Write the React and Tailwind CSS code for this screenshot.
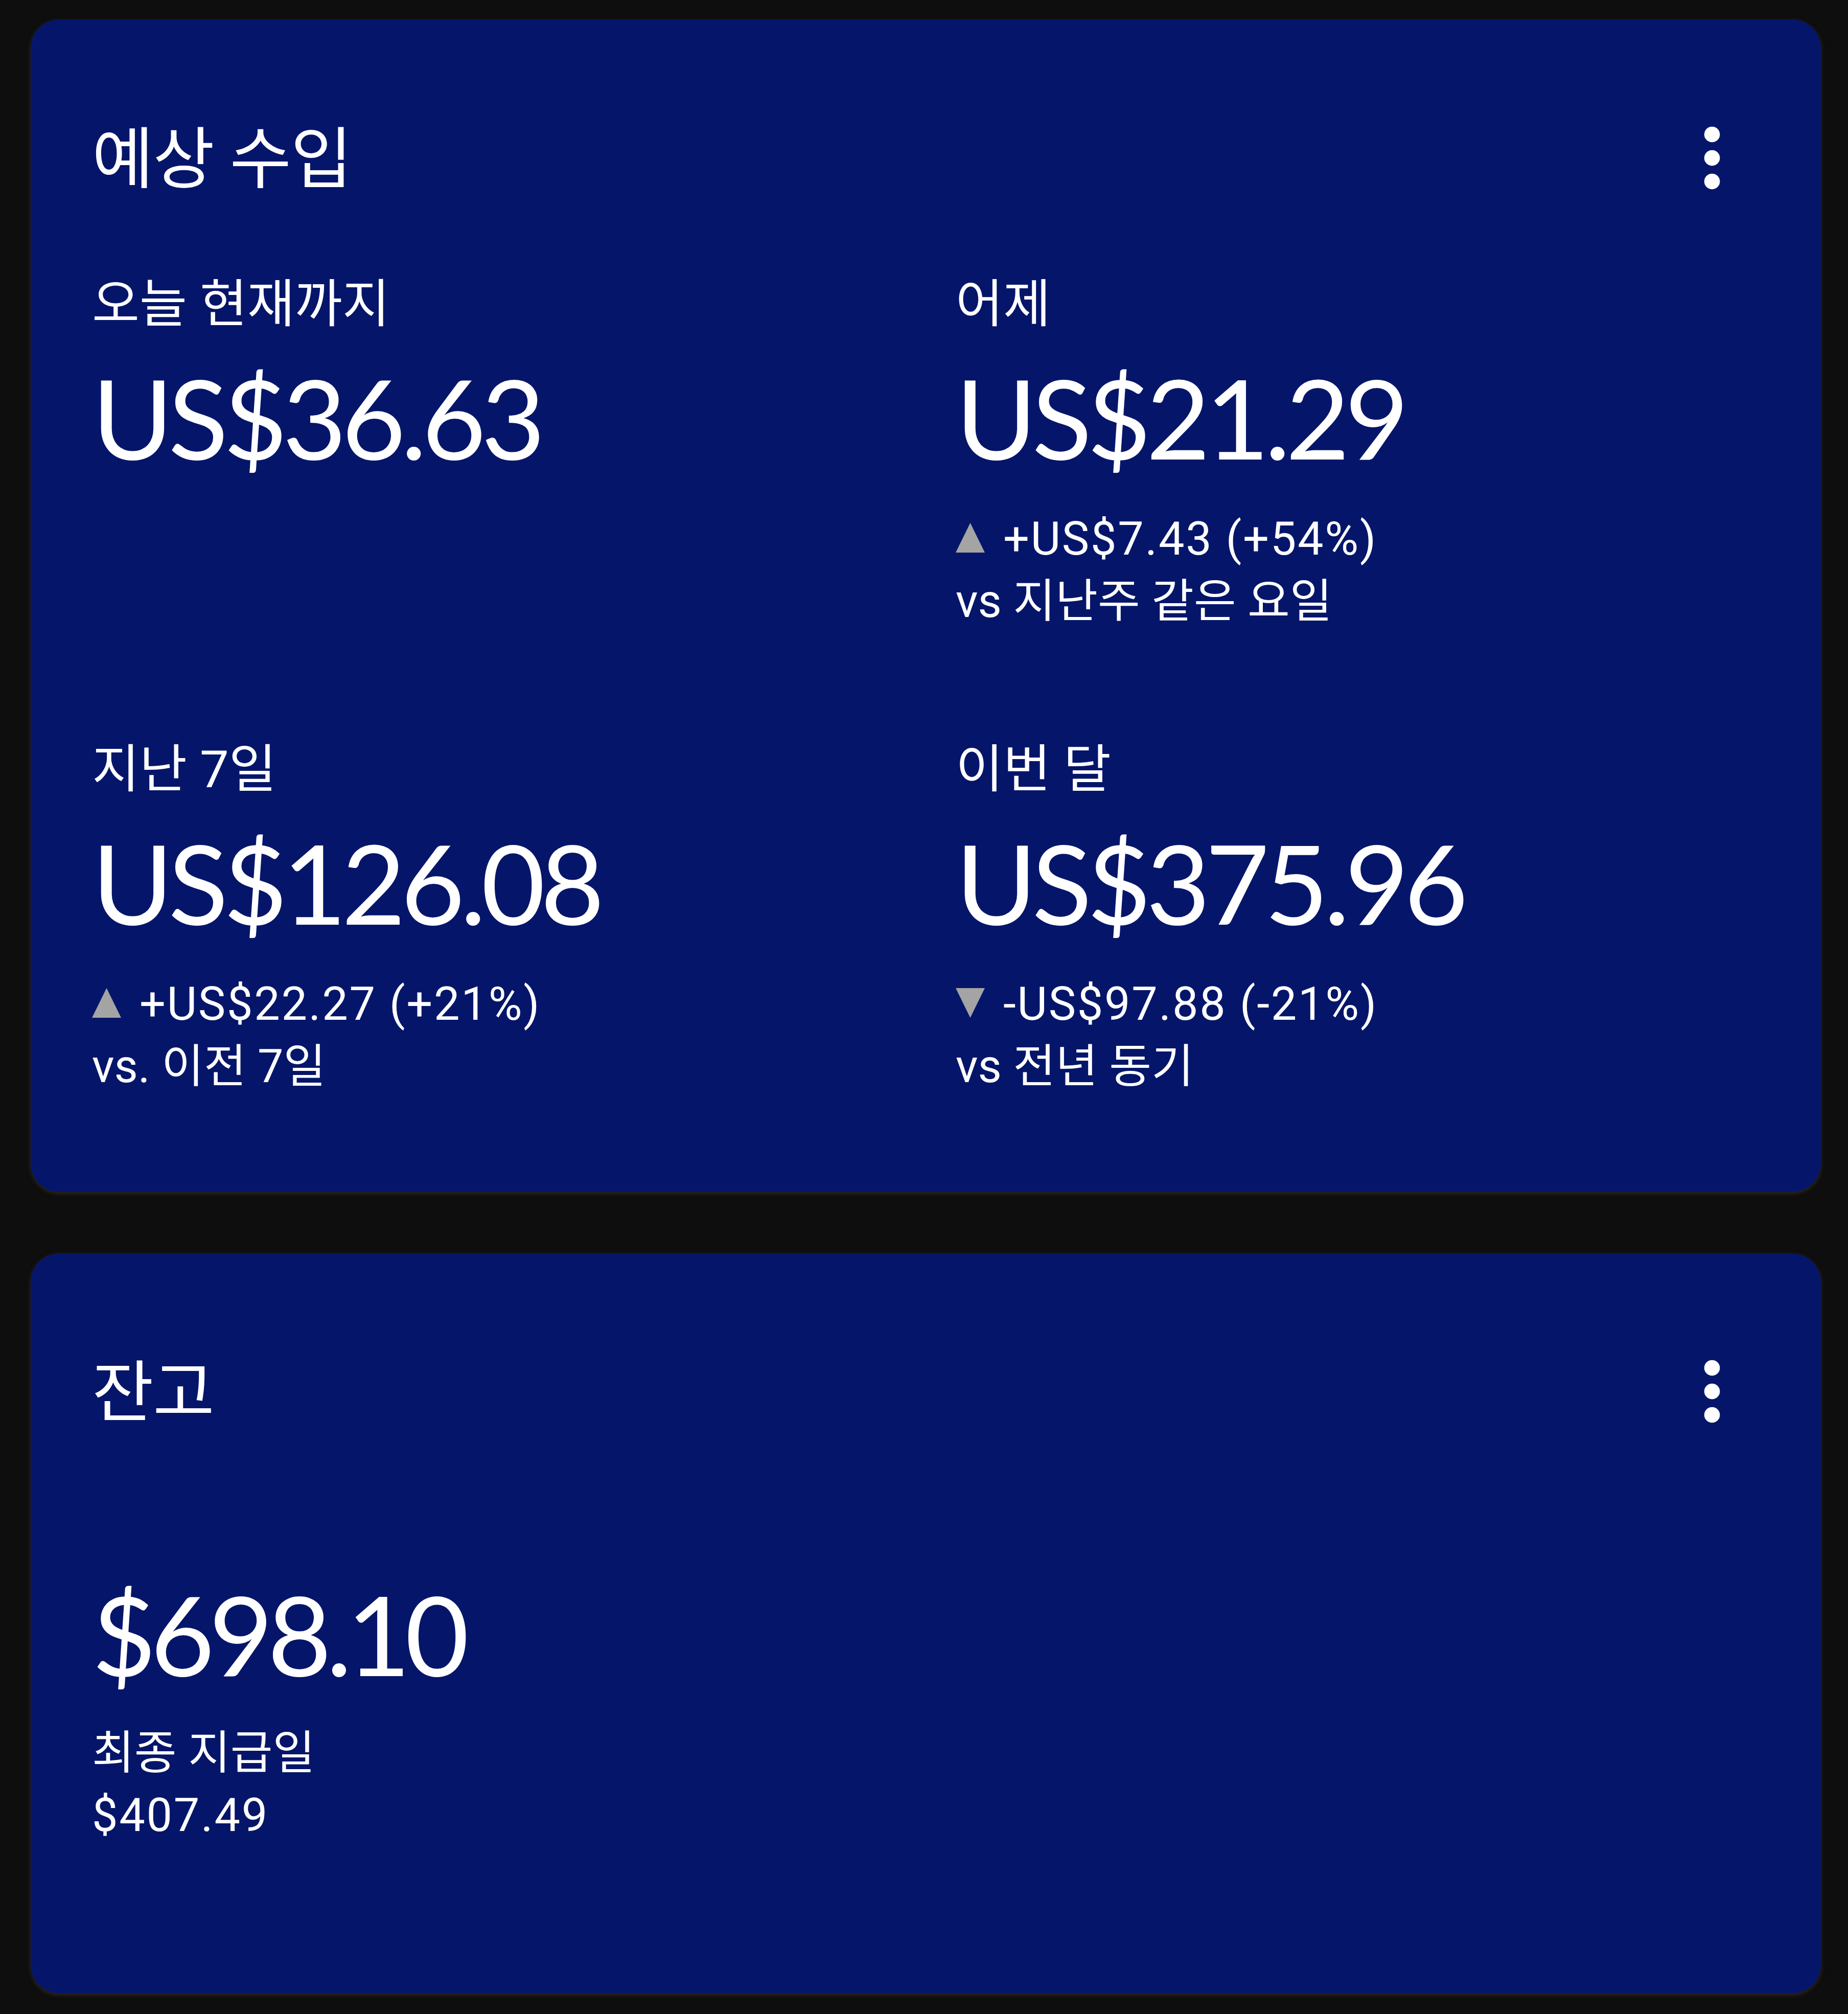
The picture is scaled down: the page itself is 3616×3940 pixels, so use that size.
const KO = "font-['Roboto','Noto_Sans_CJK_KR',sans-serif]"
const NUM = "font-['Lato','Roboto',sans-serif]"

const stats = [
  { label: '오늘 현재까지', value: 'US$36.63' },
  {
    label: '어제',
    value: 'US$21.29',
    up: true,
    delta: '+US$7.43 (+54%)',
    compare: 'vs 지난주 같은 요일',
  },
  {
    label: '지난 7일',
    value: 'US$126.08',
    up: true,
    delta: '+US$22.27 (+21%)',
    compare: 'vs. 이전 7일',
  },
  {
    label: '이번 달',
    value: 'US$375.96',
    up: false,
    delta: '-US$97.88 (-21%)',
    compare: 'vs 전년 동기',
  },
]

function MoreIcon() {
  return (
    <svg viewBox="0 0 24 24" className="h-[184px] w-[184px] shrink-0" fill="white">
      <circle cx="12" cy="6" r="2" />
      <circle cx="12" cy="12" r="2" />
      <circle cx="12" cy="18" r="2" />
    </svg>
  )
}

function Trend({ up }) {
  return (
    <svg
      viewBox="0 0 57 58"
      className="mr-[36px] inline-block h-[58px] w-[57px] align-[4px]"
      fill="#a4a4a4"
    >
      {up ? <polygon points="28.5,0 57,58 0,58" /> : <polygon points="0,0 57,0 28.5,58" />}
    </svg>
  )
}

function CardHeader({ title }) {
  return (
    <div className="flex items-start justify-between">
      <h2 className={`mt-[30px] text-[131px] leading-[131px] tracking-[-0.01em] ${KO}`}>{title}</h2>
      <MoreIcon />
    </div>
  )
}

function Stat({ label, value, delta, compare, up }) {
  return (
    <div>
      <p className={`text-[101px] leading-[101px] ${KO}`}>{label}</p>
      <p className={`mt-[62px] text-[216px] leading-none tracking-[-0.044em] ${NUM}`}>{value}</p>
      {delta ? (
        <div className={`mt-[70px] text-[90px] leading-[122px] ${KO}`}>
          <p className="tracking-[0.03em]">
            <Trend up={up} />
            {delta}
          </p>
          <p>{compare}</p>
        </div>
      ) : null}
    </div>
  )
}

export default function App() {
  return (
    <div className="flex h-[3940px] w-[3616px] flex-col gap-[120px] bg-[#0e0e0e] pb-[40px] pl-[60px] pr-[53px] pt-[38px] text-white">
      <section className="rounded-[56px] bg-[#05166a] pb-[184px] pl-[120px] pr-[121px] pt-[179px] shadow-[0_3px_8px_rgba(80,60,30,0.55)]">
        <CardHeader title="예상 수입" />
        <div className="mt-[144px] grid grid-cols-[1690px_1fr] gap-y-[217px]">
          {stats.map((s) => (
            <Stat key={s.label} {...s} />
          ))}
        </div>
      </section>

      <section className="rounded-[56px] bg-[#05166a] pb-[287px] pl-[120px] pr-[121px] pt-[178px] shadow-[0_3px_8px_rgba(80,60,30,0.55)]">
        <CardHeader title="잔고" />
        <p className={`mt-[274px] text-[216px] leading-none tracking-[-0.05em] ${NUM}`}>$698.10</p>
        <div className={`mt-[65px] text-[90px] leading-[122px] ${KO}`}>
          <p>최종 지급일</p>
          <p className="tracking-[0.03em]">$407.49</p>
        </div>
      </section>
    </div>
  )
}
